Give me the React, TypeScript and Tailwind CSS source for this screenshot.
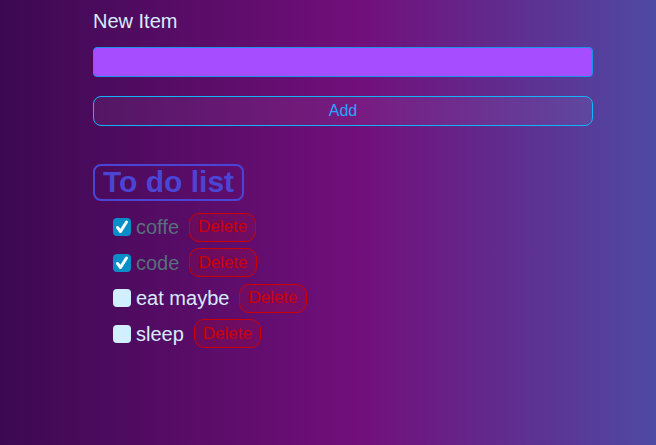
import React, { useState } from "react";

type Todo = { id: number; title: string; completed: boolean };

const App = () => {
  const [newItem, setNewItem] = useState("");
  const [todos, setTodos] = useState<Todo[]>([
    { id: 1, title: "coffe", completed: true },
    { id: 2, title: "code", completed: true },
    { id: 3, title: "eat maybe", completed: false },
    { id: 4, title: "sleep", completed: false },
  ]);

  const handleAdd = (event: React.FormEvent) => {
    event.preventDefault();
    if (newItem.length === 0) return;
    setTodos([...todos, { id: Date.now(), title: newItem, completed: false }]);
    setNewItem("");
  };

  const toggleTodo = (id: number) => {
    setTodos(todos.map((t) => (t.id === id ? { ...t, completed: !t.completed } : t)));
  };

  const deleteTodo = (id: number) => {
    setTodos(todos.filter((t) => t.id !== id));
  };

  return (
    <div className="min-h-screen w-full bg-[linear-gradient(to_right,#3c0951,#720f7b_55%,#4e4aa3)] font-['Liberation_Sans',Arial,sans-serif]">
      <div className="w-[500px] ml-[93px] pt-[9px]">
        <form onSubmit={handleAdd} className="flex flex-col">
          <label htmlFor="item" className="text-[20px] leading-[24px] text-[#d6ecff] mb-[14px]">
            New Item
          </label>
          <input
            id="item"
            value={newItem}
            onChange={(event) => setNewItem(event.target.value)}
            className="h-[30px] bg-[#a64dff] border border-[#1c8fe8] rounded-[4px] px-2 text-white focus:outline-none"
          />
          <button
            type="submit"
            className="mt-[19px] h-[30px] border border-[#12b4ff] rounded-[8px] bg-white/5 text-[#1fa8ff] text-[16px]"
          >
            Add
          </button>
        </form>

        <h1 className="mt-[38px] inline-block border-2 border-[#4a45d4] rounded-[8px] px-[8px] h-[37px] leading-[32px] text-[30px] font-bold text-[#4a45d4]">
          To do list
        </h1>

        <ul className="mt-[11px] ml-[20px] flex flex-col gap-[5.6px]">
          {todos.map((todo) => (
            <li key={todo.id} className="flex items-center h-[30px]">
              <label className="flex items-center">
                <span className="relative w-[18px] h-[18px]">
                  <input
                    type="checkbox"
                    checked={todo.completed}
                    onChange={() => toggleTodo(todo.id)}
                    className="block w-[18px] h-[18px] appearance-none rounded-[4px] bg-[#d2efff] checked:bg-[#0a8ec8]"
                  />
                  {todo.completed && (
                    <svg className="absolute left-0 top-0 w-[18px] h-[18px] pointer-events-none" viewBox="0 0 18 18">
                      <path d="M4.5 9.5 L7.5 13.5 L13.5 4" fill="none" stroke="white" strokeWidth="3" strokeLinecap="round" strokeLinejoin="round" />
                    </svg>
                  )}
                </span>
                <span className={`ml-[5px] text-[20px] ${todo.completed ? "text-[#57707a]" : "text-[#d6ecff]"}`}>
                  {todo.title}
                </span>
              </label>
              <button
                onClick={() => deleteTodo(todo.id)}
                className="ml-[10px] h-[29px] px-[8px] border border-[#cc0000] rounded-[10px] bg-[#ff0000]/10 text-[#cc0000] text-[17px]"
              >
                Delete
              </button>
            </li>
          ))}
        </ul>
      </div>
    </div>
  );
};

export default App;
